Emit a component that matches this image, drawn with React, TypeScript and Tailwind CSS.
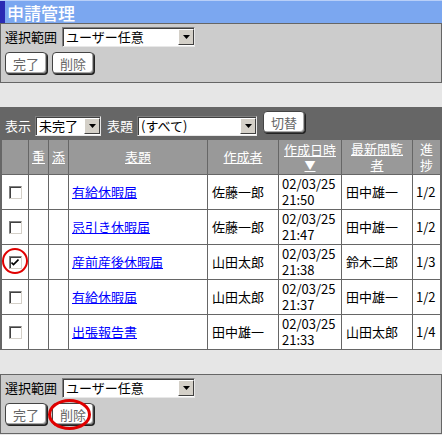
import React from "react";

type Row = {
  title: string;
  author: string;
  date: string;
  time: string;
  viewer: string;
  progress: string;
  checked?: boolean;
};

const rows: Row[] = [
  { title: "有給休暇届", author: "佐藤一郎", date: "02/03/25", time: "21:50", viewer: "田中雄一", progress: "1/2" },
  { title: "忌引き休暇届", author: "佐藤一郎", date: "02/03/25", time: "21:47", viewer: "田中雄一", progress: "1/2" },
  { title: "産前産後休暇届", author: "山田太郎", date: "02/03/25", time: "21:38", viewer: "鈴木二郎", progress: "1/3", checked: true },
  { title: "有給休暇届", author: "山田太郎", date: "02/03/25", time: "21:37", viewer: "田中雄一", progress: "1/2" },
  { title: "出張報告書", author: "田中雄一", date: "02/03/25", time: "21:33", viewer: "山田太郎", progress: "1/4" },
];

function Arrow() {
  return (
    <span className="flex h-[16px] w-[16px] shrink-0 items-center justify-center border border-b-[#404040] border-l-white border-r-[#404040] border-t-white bg-[#d4d0c8]">
      <svg width="7" height="4" viewBox="0 0 7 4">
        <path d="M0 0h7L3.5 4z" fill="#000" />
      </svg>
    </span>
  );
}

function Select({ value, className }: { value: string; className: string }) {
  return (
    <div
      className={
        "flex h-[20px] items-center border border-b-[#e8e8e8] border-l-[#808080] border-r-[#e8e8e8] border-t-[#808080] bg-white shadow-[inset_1px_1px_0_#404040] " +
        className
      }
    >
      <span className="flex-1 overflow-hidden whitespace-nowrap pl-[3px] leading-[18px]">{value}</span>
      <Arrow />
    </div>
  );
}

function Btn({ label }: { label: string }) {
  return (
    <button className="flex h-[22px] items-center rounded-[4px] border border-[#444] bg-white px-[7px] text-[13px] leading-none text-[#666] shadow-[inset_-1px_-1px_0_#aaa,1px_1px_0_#222]">
      {label}
    </button>
  );
}

function Checkbox({ checked }: { checked?: boolean }) {
  return (
    <span className="flex h-[13px] w-[13px] items-center justify-center border border-b-[#d4d0c8] border-l-[#808080] border-r-[#d4d0c8] border-t-[#808080] bg-white shadow-[inset_1px_1px_0_#404040]">
      {checked && (
        <svg width="8" height="7" viewBox="0 0 8 7">
          <path d="M0.5 3.5l2 2 5-5" stroke="#000" strokeWidth="1.6" fill="none" />
        </svg>
      )}
    </span>
  );
}

function Panel() {
  return (
    <div className="h-[60px] border border-[#666] bg-[#ccc] pl-[4px] pt-[3px]">
      <div className="flex h-[20px] items-center gap-[5px]">
        <span>選択範囲</span>
        <Select value="ユーザー任意" className="w-[133px]" />
      </div>
      <div className="mt-[5px] flex gap-[5px]">
        <Btn label="完了" />
        <Btn label="削除" />
      </div>
    </div>
  );
}

const head = "flex items-center justify-center bg-[#999] text-center leading-[16px] text-white";
const cell = "flex items-center bg-white";

export default function App() {
  return (
    <div
      className="relative h-[435px] w-[442px] overflow-hidden bg-[#e6e6e6] text-[13px] text-black"
      style={{ fontFamily: '"Noto Sans CJK JP", "Liberation Sans", sans-serif' }}
    >
      {/* title */}
      <div className="flex h-[23px] items-center border-t border-[#b8cff8] bg-[#7ba7f0]">
        <div className="h-full w-[5px] bg-[#2a2ab4]" />
        <span className="pl-[2px] text-[17px] font-medium leading-none text-white">申請管理</span>
      </div>

      <Panel />

      {/* list */}
      <div className="mt-[24px] bg-[#666]">
        <div className="flex h-[33px] items-start text-white">
          <span className="ml-[5px] mt-[11px] leading-[16px]">表示</span>
          <div className="ml-[4px] mt-[9px] text-black">
            <Select value="未完了" className="w-[66px]" />
          </div>
          <span className="ml-[6px] mt-[11px] leading-[16px]">表題</span>
          <div className="ml-[4px] mt-[9px] text-black">
            <Select value="(すべて)" className="w-[120px]" />
          </div>
          <div className="ml-[6px] mt-[4px]">
            <Btn label="切替" />
          </div>
        </div>

        <div className="grid grid-cols-[26px_19px_19px_138px_70px_62px_70px_27px] gap-px pb-px pl-[2px]">
          <div className={head + " h-[34px]"} />
          <div className={head}>
            <a className="underline">重</a>
          </div>
          <div className={head}>
            <a className="underline">添</a>
          </div>
          <div className={head}>
            <a className="underline">表題</a>
          </div>
          <div className={head}>
            <a className="underline">作成者</a>
          </div>
          <div className={head + " flex-col"}>
            <a className="underline">作成日時</a>
            <a className="text-[11px] leading-[14px] underline">▼</a>
          </div>
          <div className={head}>
            <a className="underline">
              最新閲覧
              <br />者
            </a>
          </div>
          <div className={head}>
            <span>
              進<br />捗
            </span>
          </div>

          {rows.map((r, i) => (
            <React.Fragment key={i}>
              <div className={cell + " h-[34px] justify-center"}>
                <Checkbox checked={r.checked} />
              </div>
              <div className={cell} />
              <div className={cell} />
              <div className={cell + " pl-[3px]"}>
                <a className="text-[#0000ff] underline">{r.title}</a>
              </div>
              <div className={cell + " pl-[4px]"}>{r.author}</div>
              <div className={cell + " pl-[3px] leading-[16px]"}>
                <span>
                  {r.date}
                  <br />
                  {r.time}
                </span>
              </div>
              <div className={cell + " pl-[4px]"}>{r.viewer}</div>
              <div className={cell + " pl-[3px]"}>{r.progress}</div>
            </React.Fragment>
          ))}
        </div>
      </div>

      <div className="mt-[24px]">
        <Panel />
      </div>

      {/* red marks */}
      <div className="absolute left-[2px] top-[248px] h-[26px] w-[26px] rounded-full border-[2px] border-[#e00000]" />
      <div className="absolute left-[48px] top-[399px] h-[31px] w-[43px] rounded-[50%] border-[3px] border-[#e00000]" />
    </div>
  );
}
